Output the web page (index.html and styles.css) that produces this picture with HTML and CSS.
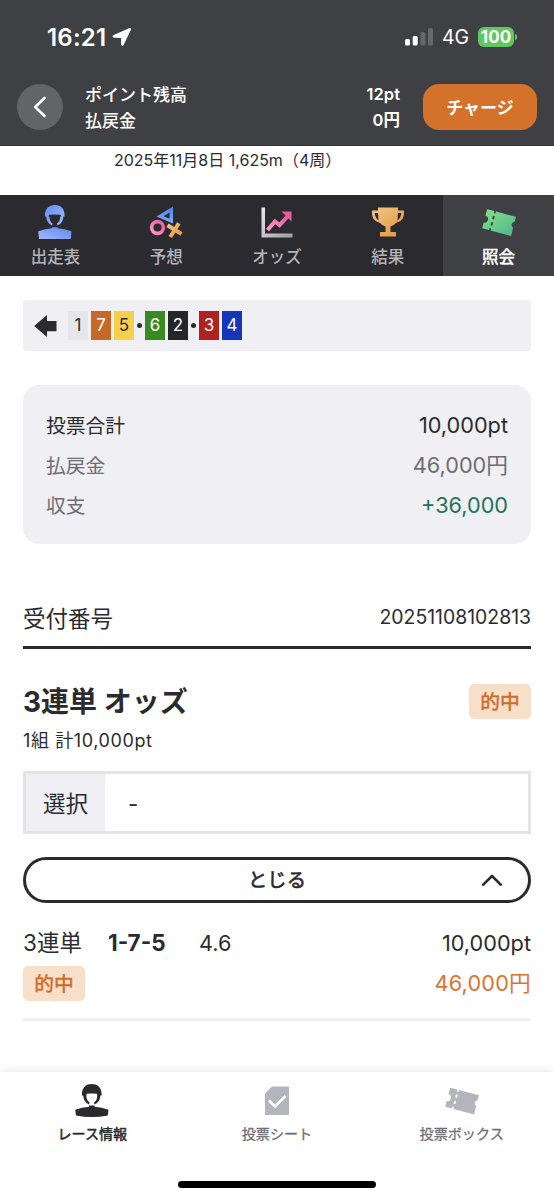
FILE: index.html
```
<!DOCTYPE html>
<html lang="ja">
<head>
<meta charset="utf-8">
<title>照会</title>
<link rel="stylesheet" href="styles.css">
</head>
<body>
<svg class="defs" width="0" height="0" aria-hidden="true">
  <defs>
    <linearGradient id="blue" x1="0" y1="0" x2="1" y2="1"><stop offset="0" stop-color="#5d8df5"/><stop offset="1" stop-color="#a9bcfb"/></linearGradient>
    <linearGradient id="blue2" x1="0" y1="1" x2="1" y2="0"><stop offset="0" stop-color="#a3b8fb"/><stop offset="1" stop-color="#5c87f0"/></linearGradient>
    <linearGradient id="blue3" x1="0" y1="0" x2="0" y2="1"><stop offset="0" stop-color="#4a7cf0"/><stop offset="1" stop-color="#7fb0f2"/></linearGradient>
    <linearGradient id="pink" x1="0" y1="1" x2="1" y2="0"><stop offset="0" stop-color="#f7a0cc"/><stop offset="1" stop-color="#e8589f"/></linearGradient>
    <linearGradient id="gold" x1="0" y1="0" x2="1" y2="1"><stop offset="0" stop-color="#f3c887"/><stop offset="1" stop-color="#e2913c"/></linearGradient>
    <linearGradient id="green" x1="0" y1="0" x2="1" y2="1"><stop offset="0" stop-color="#86e088"/><stop offset="1" stop-color="#4eb58c"/></linearGradient>
    <linearGradient id="silver" x1="0" y1="0" x2="1" y2="1"><stop offset="0" stop-color="#ececee"/><stop offset="1" stop-color="#9b9ea1"/></linearGradient>
    <symbol id="ticket" viewBox="0 0 34 28">
      <path d="M5.2 .7 12.400 2.600 11.900 4.600 13.500 5 14 3 34 8.300 32.700 13.200A3.200 3.200 0 0 0 31.100 19.100L29.200 27.500 8.600 21.900 9.100 19.900 7.500 19.500 7 21.500.2 19.700 1.700 14A3.400 3.400 0 0 0 3.400 7.200ZM11 7.300 10.200 10.600 12 11.100 12.800 7.800ZM9.400 13.400 8.500 16.700 10.300 17.200 11.200 13.900Z" fill-rule="evenodd"/>
    </symbol>
  </defs>
</svg>

<header class="top">
  <div class="status">
    <span class="time">16:21</span>
    <svg class="locate" width="20" height="20" viewBox="0 0 20 20"><path d="M1.200 8.300 17 1.200Q19.500.5 18.800 3L11.600 18Q10 20 9.200 17.500L9 11 2.200 10.800Q-.5 9.800 1.200 8.300Z"/></svg>
    <svg class="signal" width="29" height="18" viewBox="0 0 29 18"><rect x="0" y="11" width="5" height="6.500" rx="1.500"/><rect x="7.700" y="8" width="5" height="9.500" rx="1.500"/><g fill="#66676a"><rect x="15.400" y="4" width="5" height="13.500" rx="1.500"/><rect x="23" y="0" width="5" height="17.500" rx="1.500"/></g></svg>
    <span class="network">4G</span>
    <span class="battery">100</span><i class="battery-tip"></i>
  </div>
  <div class="balance">
    <button class="back" aria-label="戻る"><svg width="14" height="22" viewBox="0 0 14 22"><path d="M11.500 2 2.200 11l9.300 9"/></svg></button>
    <dl class="points">
      <dt>ポイント残高</dt><dd>12pt</dd>
      <dt>払戻金</dt><dd>0円</dd>
    </dl>
    <button class="charge">チャージ</button>
  </div>
</header>

<p class="race">2025年11月8日 1,625m（4周）</p>

<nav class="tabs">
  <a class="tab">
    <svg width="34" height="36" viewBox="0 0 34 36"><path fill="url(#blue)" d="M7 12.500C6.500 4.500 11 1 16.800 1s10.300 3.500 9.800 11.500H23.400L22.500 10.800Q16.800 10 11.100 10.800L10.200 12.500ZM8.200 12.500H11.400Q11.200 17 14.600 19.600L14 21.600Q8.600 19 8.200 12.500ZM25.400 12.500H22.200Q22.400 17 19 19.600L19.600 21.600Q25 19 25.400 12.500Z"/><path fill="url(#blue2)" d="M14 23.200h5.600v1.100q7.200.4 13.900 3l-.7 7.700H1L.2 27.300Q7 24.700 14 24.300Z"/></svg>
    <span>出走表</span>
  </a>
  <a class="tab">
    <svg width="34" height="36" viewBox="0 0 34 36"><path fill="url(#blue3)" fill-rule="evenodd" d="M24 2.500V19.500L7.500 12.500ZM20.600 8.500 14.500 12.200 20.600 14.700Z"/><circle cx="8.500" cy="23.500" r="5.900" fill="none" stroke="url(#pink)" stroke-width="3.600"/><path fill="none" stroke="url(#gold)" stroke-width="4" d="M18.500 21.300 32.500 30M29.800 19.300 21.300 33"/></svg>
    <span>予想</span>
  </a>
  <a class="tab">
    <svg width="34" height="36" viewBox="0 0 34 36"><path fill="url(#silver)" d="M1.500 3.500H5V29.500H32.500V33.500H1.500Z"/><path fill="none" stroke="url(#pink)" stroke-width="4" d="m7.500 26 7.500-8.500 4.500 3.500L28 12"/><path fill="#e75d9f" d="M21.500 7.500H31.500V17.500Z"/></svg>
    <span>オッズ</span>
  </a>
  <a class="tab">
    <svg width="34" height="36" viewBox="0 0 34 36"><path fill="url(#gold)" fill-rule="evenodd" d="M7 3.500H27V6.500H33Q34 16.800 25 19Q22.500 22 19.500 22.500V28H25V32.500H9V28H14.500V22.500Q11.500 22 9 19Q0 16.800 1 6.500H7ZM7 9H3.700Q4 14 7.500 16.200ZM27 9L26.500 16.200Q30 14 30.300 9Z"/></svg>
    <span>結果</span>
  </a>
  <a class="tab active">
    <svg width="34" height="36" viewBox="0 0 34 36"><use href="#ticket" y="4.500" width="34" height="28" fill="url(#green)"/></svg>
    <span>照会</span>
  </a>
</nav>

<main>
  <section class="lineup">
    <svg width="23" height="22" viewBox="0 0 23 22"><path d="M.2 11 13 0V6H22.500V16.200H13V22Z"/></svg>
    <b class="n1">1</b><b class="n7">7</b><b class="n5">5</b><i></i><b class="n6">6</b><b class="n2">2</b><i></i><b class="n3">3</b><b class="n4">4</b>
  </section>

  <section class="summary">
    <div class="sum total"><span>投票合計</span><strong>10,000pt</strong></div>
    <div class="sum"><span>払戻金</span><strong>46,000円</strong></div>
    <div class="sum gain"><span>収支</span><strong>+36,000</strong></div>
  </section>

  <section class="receipt"><span>受付番号</span><span class="number">20251108102813</span></section>

  <section class="bet-head">
    <h2>3連単 オッズ</h2><span class="hit">的中</span>
  </section>
  <p class="bet-sub">1組 計10,000pt</p>

  <div class="choice"><span class="choice-label">選択</span><span class="choice-value">-</span></div>

  <button class="toggle">とじる<svg width="20" height="12" viewBox="0 0 20 12"><path d="M1.300 10.700 10 2l8.700 8.700"/></svg></button>

  <section class="ticket-row">
    <div class="line"><span class="kind">3連単</span><strong class="combo">1-7-5</strong><span class="odds">4.6</span><span class="amount">10,000pt</span></div>
    <div class="line second"><span class="hit">的中</span><span class="amount payout">46,000円</span></div>
  </section>
</main>

<footer class="bottom">
  <nav class="menu">
    <a class="item current">
      <svg width="34" height="34" viewBox="0 0 34 34"><path d="M7 11.500C6.500 3.500 11 0 16.800 0s10.300 3.500 9.800 11.500H25.400Q25 18 19.600 20.600L19 18.600Q22.400 16 22.200 11.500L22 9.800Q16.800 9 11.600 9.800L11.400 11.500Q11.200 16 14.600 18.600L14 20.600Q8.600 18 8.200 11.500ZM14 21.500h5.600v1.300q7.200.4 13.900 3L32.800 31.500Q17 34.500 1 31.500L.2 25.800Q7 23.200 14 22.800Z"/></svg>
      <span>レース情報</span>
    </a>
    <a class="item">
      <svg width="34" height="34" viewBox="0 0 34 34"><path d="M12 2.500H29V31H5V9.500Z"/><path fill="none" stroke="#fff" stroke-width="2.600" d="m9 16.500 6 6L25.500 12"/></svg>
      <span>投票シート</span>
    </a>
    <a class="item">
      <svg width="34" height="34" viewBox="0 0 34 34"><use href="#ticket" y="3" width="34" height="28"/></svg>
      <span>投票ボックス</span>
    </a>
  </nav>
  <div class="home"></div>
</footer>
</body>
</html>
```
FILE: styles.css
```
* { box-sizing: border-box; }
body {
  margin: 0; width: 554px; height: 1200px; overflow: hidden;
  display: flex; flex-direction: column;
  background: #fff; color: #2b2b2f;
  font-family: Inter, "Noto Sans CJK JP", sans-serif;
}
button { font: inherit; border: 0; padding: 0; }
p, h2, dl, dd { margin: 0; }
svg { display: block; flex: none; }
.defs { position: absolute; }

.top { height: 146px; background: #3f4043; color: #fff; border-bottom: 1px solid #343538; flex: none; }
.status { height: 74px; padding-left: 47px; display: flex; align-items: center; }
.status svg { fill: #fff; }
.time { width: 60px; font-size: 24px; font-weight: 600; letter-spacing: .2px; white-space: nowrap; }
.locate { margin-left: 5px; }
.signal { margin-left: 273px; }
.network { width: 27px; margin-left: 8px; font-size: 19.500px; }
.battery { width: 36px; height: 20px; margin-left: 9px; border-radius: 6px; background: #5fc85e; font-size: 17px; line-height: 20px; font-weight: 700; text-align: center; }
.battery-tip { width: 2px; height: 6px; margin-left: 1px; border-radius: 0 2px 2px 0; background: #5fc85e; }
.balance { height: 65px; padding: 0 17px; display: flex; align-items: center; }
.back { width: 46px; height: 46px; border-radius: 50%; background: #636468; display: grid; place-items: center; }
.back path { fill: none; stroke: #fff; stroke-width: 2.6; stroke-linecap: round; stroke-linejoin: round; }
.points { width: 315px; margin-left: 22px; padding-top: 2px; display: grid; grid-template-columns: 1fr auto; font-size: 17px; line-height: 26px; font-weight: 500; }
.points dd { margin-top: -1px; text-align: right; font-weight: 600; font-size: 16.500px; }
.charge { width: 114px; height: 46px; margin-left: 23px; border-radius: 16px; background: #d4722b; color: #fff; font-size: 17px; font-weight: 700; }

.race { height: 49px; padding: 1px 0 0 114px; font-size: 16px; line-height: 26px; white-space: nowrap; flex: none; }

.tabs { height: 81px; display: grid; grid-template-columns: repeat(5, 1fr); background: #2b2b2f; color: #b4b4b9; flex: none; }
.tab { display: flex; flex-direction: column; align-items: center; padding-top: 9px; }
.tab span { font-size: 16.500px; line-height: 24px; margin-top: 5px; font-weight: 500; }
.active { background: #3f4043; color: #fff; }
.active span { font-weight: 400; -webkit-text-stroke: .5px currentColor; }

main { padding: 24px 23px 0; }
.lineup { height: 51px; padding-left: 11px; border-radius: 4px; background: #efeff4; display: flex; align-items: center; gap: 3px; }
.lineup svg { margin-right: 8px; fill: #2b2b2f; }
.lineup b { width: 20px; height: 29px; font-size: 17px; line-height: 29px; font-weight: 400; text-align: center; color: #fff; }
.lineup i { width: 5px; height: 5px; border-radius: 50%; background: #2b2b2f; }
.lineup .n1 { background: #e5e6e8; color: #2b2b2f; }
.lineup .n7 { background: #c86826; }
.lineup .n5 { background: #f8cf4a; color: #2b2b2f; }
.n6 { background: #388a21; }
.n2 { background: #25262b; }
.n3 { background: #b02120; }
.n4 { background: #1436b9; }

.summary { height: 159px; margin-top: 34px; padding: 20px 23px; border-radius: 16px; background: #efeff4; }
.sum { height: 40px; display: flex; align-items: center; justify-content: space-between; color: #6d6d72; font-size: 19.800px; line-height: 40px; }
.sum span { padding-top: 2px; }
.sum strong { font-size: 21.700px; font-weight: 400; }
.total { color: #2b2b2f; }
.gain strong { color: #23735a; }

.receipt { height: 61px; margin-top: 44px; border-bottom: 3px solid #2b2b2f; display: flex; align-items: center; justify-content: space-between; font-size: 22.500px; }
.number { font-size: 19.400px; }

.bet-head { height: 36px; margin-top: 34px; display: flex; align-items: center; justify-content: space-between; }
.bet-head h2 { padding-top: 2px; font-size: 28px; line-height: 36px; font-weight: 700; }
.hit { width: 62px; height: 35px; border-radius: 5px; background: #f8dfca; color: #cf6b28; font-size: 19.800px; line-height: 36px; font-weight: 400; -webkit-text-stroke: .5px currentColor; text-align: center; }
.bet-sub { height: 26px; margin-top: 9px; font-size: 18px; line-height: 26px; letter-spacing: .6px; }

.choice { height: 63px; margin-top: 17px; border: 3px solid #e3e3e8; display: flex; align-items: stretch; line-height: 59px; font-size: 22.500px; }
.choice-label { width: 79px; background: #efeff4; text-align: center; }
.choice-value { padding-left: 23px; }

.toggle { position: relative; width: 508px; height: 46px; margin-top: 23px; border: 3px solid #2b2b2f; border-radius: 23px; background: #fff; color: #2b2b2f; font-size: 19.300px; line-height: 38px; font-weight: 400; -webkit-text-stroke: .6px currentColor; display: block; }
.toggle svg { position: absolute; right: 26px; top: 14px; fill: none; stroke: #2b2b2f; stroke-width: 2.6; stroke-linejoin: round; stroke-linecap: round; }

.ticket-row { height: 118px; padding-top: 20px; border-bottom: 3px solid #f0f0f2; }
.line { height: 40px; display: flex; align-items: center; font-size: 21.700px; line-height: 40px; }
.kind { width: 85px; font-size: 22.500px; }
.combo { width: 91px; font-size: 22.500px; font-weight: 700; }
.amount { margin-left: auto; }
.payout { color: #dc7430; letter-spacing: .2px; }

.bottom { margin-top: auto; height: 128px; background: #fff; box-shadow: 0 -2px 8px rgba(0, 0, 0, .08); flex: none; }
.menu { height: 109px; display: grid; grid-template-columns: repeat(3, 1fr); color: #6f7074; }
.item { display: flex; flex-direction: column; align-items: center; padding-top: 12px; fill: #b4b4bc; }
.item span { font-size: 14.100px; line-height: 20px; margin-top: 6px; font-weight: 400; -webkit-text-stroke: .3px currentColor; }
.current { color: #2b2b2f; fill: #2b2b2f; }
.current span { -webkit-text-stroke-width: .5px; }
.home { width: 198px; height: 7px; margin: 0 auto; border-radius: 4px; background: #000; }
```
